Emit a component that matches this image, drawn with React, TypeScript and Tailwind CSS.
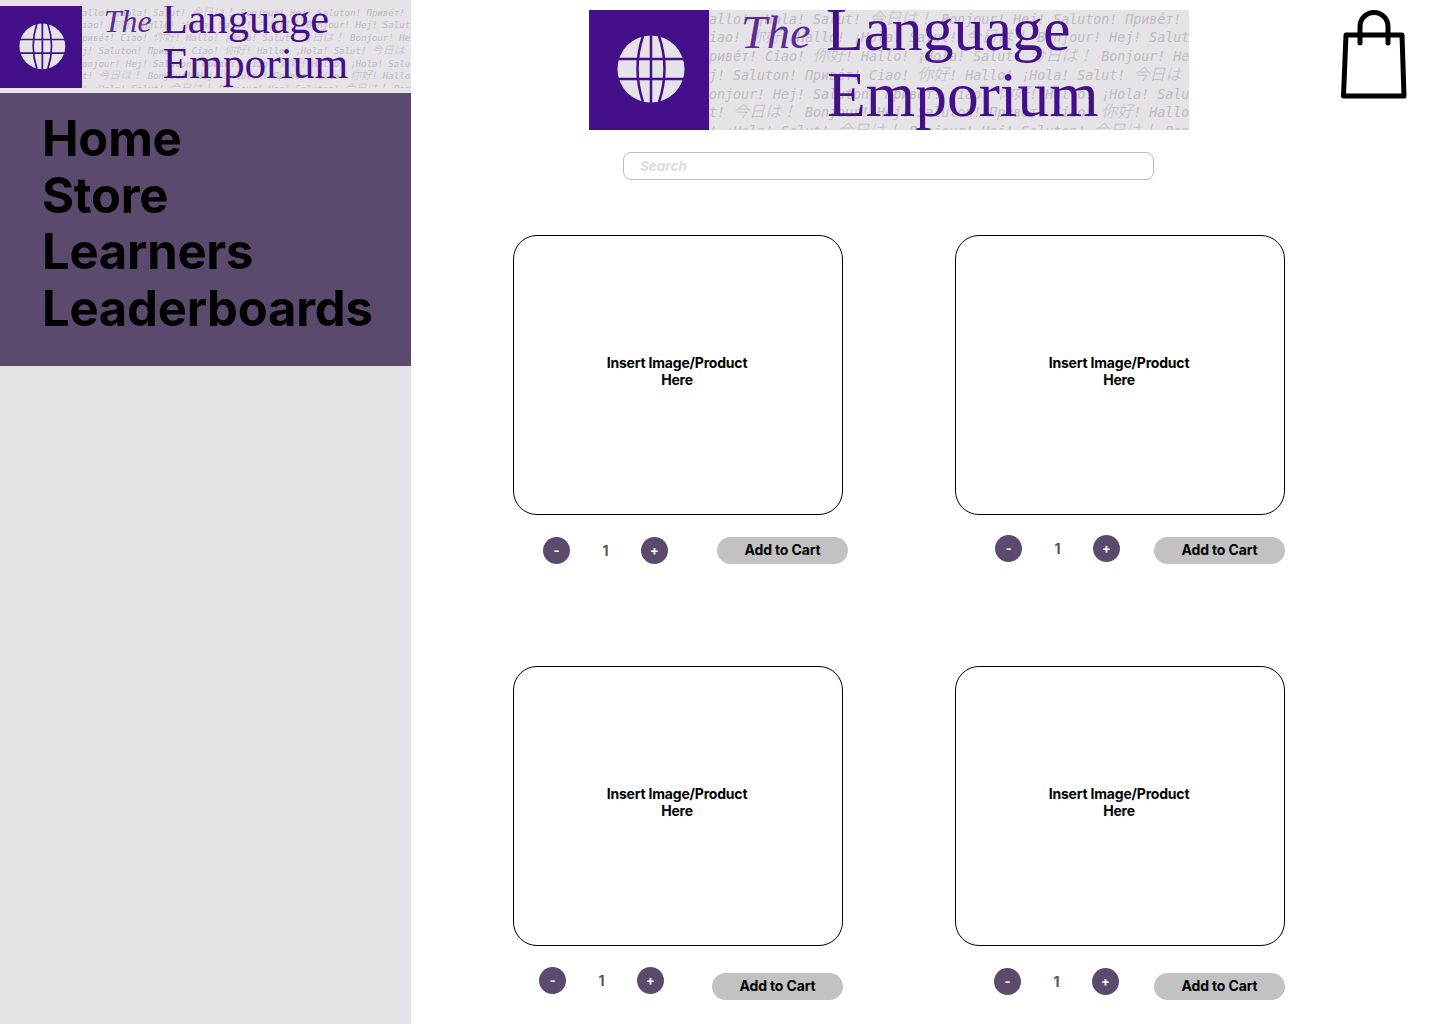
const lines = [
  { text: 'Hallo! ¡Hola! Salut! 今日は！ Bonjour! Hej! Saluton! Привéт! Ciao!', offset: 'ml-[-8px]' },
  { text: 'Ciao! 你好! Hallo! ¡Hola! Salut! 今日は！ Bonjour! Hej! Salut! Hallo!', offset: 'ml-[-8px]' },
  { text: 'Привéт! Ciao! 你好! Hallo! ¡Hola! Salut! 今日は！ Bonjour! Hej! Hola!', offset: 'ml-[-8px]' },
  { text: 'Hej! Saluton! Привéт! Ciao! 你好! Hallo! ¡Hola! Salut! 今日は！ Bonjour!', offset: 'ml-[-16px]' },
  { text: 'Bonjour! Hej! Saluton! Привéт! Ciao! 你好! Hallo! ¡Hola! Salut! 今日は', offset: 'ml-[-8px]' },
  { text: 'Salut! 今日は！ Bonjour! Hej! Saluton! Привéт! Ciao! 你好! Hallo! ¡Hola!', offset: 'ml-[-32px]' },
  { text: 'Hallo! ¡Hola! Salut! 今日は！ Bonjour! Hej! Saluton! 今日は！ Bonjour! Hej!', offset: 'ml-[-40px]' },
];

// CJK runs are twice the latin advance in the pattern
const PatternLine = ({ text }: { text: string }) => (
  <>
    {text.split(/([\u3040-\u9fff！]+)/).map((part, i) =>
      i % 2 === 1 ? (
        <span key={i} className="text-[16px] leading-none font-['Noto_Sans_CJK_JP',sans-serif] font-light">
          {part}
        </span>
      ) : (
        part
      ),
    )}
  </>
);

const Globe = () => (
  <svg width="70" height="68" viewBox="0 0 70 68" fill="none" className="ml-[4px] mb-[3px]">
    <ellipse cx="35" cy="34" rx="33.500" ry="33.500" fill="#e5e2e8" />
    <path d="M1 24h68M1 44h68M35 0v68" stroke="#43108a" strokeWidth="2.500" />
    <path d="M27 1Q16 34 27 67M43 1Q54 34 43 67" stroke="#43108a" strokeWidth="2.500" />
  </svg>
);

// the logo is drawn at its big size, the sidebar one is just scaled down
const Logo = () => (
  <div className="relative w-[600px] h-[120px] flex bg-[#e5e2e8] overflow-hidden">
    <div className="w-[120px] h-[120px] shrink-0 bg-[#43108a] flex items-center justify-center">
      <Globe />
    </div>
    <div className="flex-1 overflow-hidden pt-0 -mt-[1.500px]">
      {lines.map((line) => (
        <div
          key={line.text}
          className={`${line.offset} h-[18.800px] whitespace-nowrap text-[13.300px] leading-[18.800px] italic text-[#bfbbc4] font-['DejaVu_Sans_Mono',monospace]`}
        >
          <PatternLine text={line.text} />
        </div>
      ))}
    </div>
    <span className="absolute left-[152px] top-[-13px] text-[46.500px] leading-[72px] italic text-[#5a2b97] font-['Liberation_Serif',serif]">The</span>
    <span className="absolute left-[237px] top-[-21px] text-[62px] leading-[80px] text-[#43108a] font-['Liberation_Serif',serif]">Language</span>
    <span className="absolute left-[238px] top-[45px] text-[63.500px] leading-[80px] text-[#43108a] font-['Liberation_Serif',serif]">Emporium</span>
  </div>
);

const Bag = () => (
  <svg width="68" height="90" viewBox="0 0 68 90" fill="none" stroke="#000" strokeWidth="5" strokeLinejoin="round" strokeLinecap="round">
    <path d="M6 25h56l2 61H3.500z" />
    <path d="M20 33V16.500a14 14 0 0 1 28 0V33" />
  </svg>
);

type CardProps = { left: string; qtyTop: string; btnTop: string; btnRight: string };

const Card = ({ left, qtyTop, btnTop, btnRight }: CardProps) => (
  <div className="w-[330px]">
    <div className="h-[280px] rounded-[24px] border border-black bg-white flex items-center justify-center">
      <p className="w-[160px] mb-[8px] mr-[2px] text-center text-[14px] leading-[17px] font-bold tracking-[-0.2px] text-black">
        Insert Image/Product Here
      </p>
    </div>
    <div className="flex items-start">
      <div className={`flex items-center ${left} ${qtyTop}`}>
        <button className="w-[27px] h-[27px] rounded-full bg-[#5c4a6e] text-white text-[13px] font-bold">-</button>
        <span className="w-[71px] text-center text-[14px] font-bold text-[#555]">1</span>
        <button className="w-[27px] h-[27px] rounded-full bg-[#5c4a6e] text-white text-[13px] font-bold">+</button>
      </div>
      <button className={`w-[131px] h-[27px] pb-[2px] ml-auto rounded-full bg-[#c2c2c2] text-[14px] font-bold tracking-[-0.15px] text-black ${btnTop} ${btnRight}`}>
        Add to Cart
      </button>
    </div>
  </div>
);

const App = () => {
  return (
    <div className="w-[1440px] h-[1024px] flex bg-white overflow-hidden font-['Inter',sans-serif]">
      <aside className="w-[411px] shrink-0 bg-[#e5e2e8]">
        <div className="h-[93px] pt-[6px] overflow-hidden">
          <div className="origin-top-left scale-[0.6833]">
            <Logo />
          </div>
        </div>
        <nav className="h-[273px] bg-[#5c4a6e] pt-[18px] pl-[42px] flex flex-col text-[49px] leading-[56.600px] font-bold tracking-[-0.25px] text-black">
          <a href="#">Home</a>
          <a href="#">Store</a>
          <a href="#">Learners</a>
          <a href="#">Leaderboards</a>
        </nav>
      </aside>
      <main className="flex-1">
        <header className="flex items-start pt-[10px] pl-[178px] pr-[32px]">
          <Logo />
          <div className="ml-auto">
            <Bag />
          </div>
        </header>
        <div className="mt-[22px] ml-[212px] w-[531px] h-[28px] rounded-lg border border-[#bdbdbd] px-4 flex items-center">
          <input
            placeholder="Search"
            className="w-full h-[20px] bg-transparent text-[13.500px] italic font-bold outline-none placeholder:text-[#dcdcdc]"
          />
        </div>
        <div className="mt-[55px] ml-[102px] grid grid-cols-[330px_330px] gap-x-[112px] gap-y-[102px]">
          <Card left="ml-[30px]" qtyTop="mt-[22px]" btnTop="mt-[22px]" btnRight="mr-[-5px]" />
          <Card left="ml-[40px]" qtyTop="mt-[20px]" btnTop="mt-[22px]" btnRight="mr-0" />
          <Card left="ml-[26px]" qtyTop="mt-[21px]" btnTop="mt-[27px]" btnRight="mr-0" />
          <Card left="ml-[39px]" qtyTop="mt-[22px]" btnTop="mt-[27px]" btnRight="mr-0" />
        </div>
      </main>
    </div>
  );
};

export default App;
